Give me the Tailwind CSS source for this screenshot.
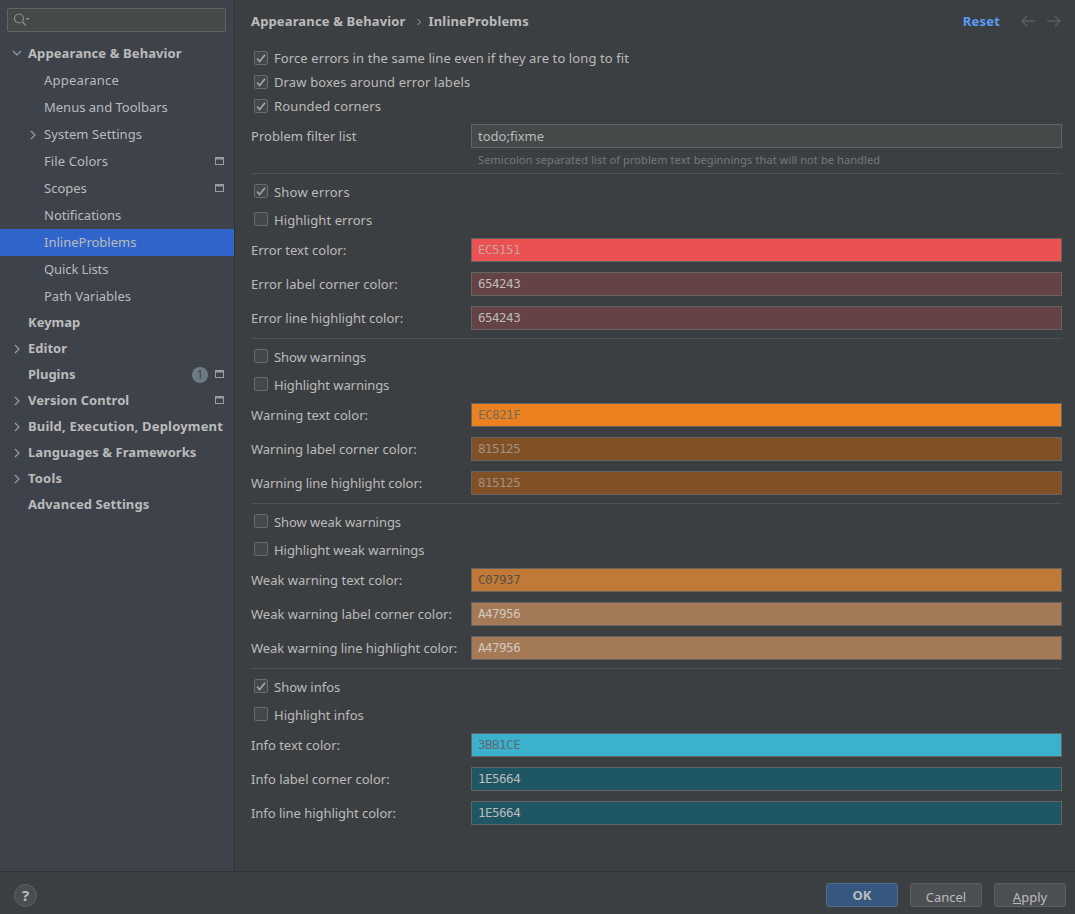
<!DOCTYPE html>
<html lang="en">
<head>
    <meta charset="UTF-8">
    <title>Settings - InlineProblems</title>
    <script src="https://cdn.jsdelivr.net/npm/@tailwindcss/browser@4"></script>
</head>
<body class="h-[914px] w-[1075px] overflow-hidden flex flex-col bg-[#3c3f41] text-[13px] text-[#bbbbbb] font-['Noto_Sans',sans-serif]">
    <div class="flex h-[871px]">
        <!-- Sidebar tree -->
        <aside class="w-[235px] shrink-0 bg-[#3e424b] border-r border-r-[#323232]">
            <div class="px-[7px] pt-[8px] pb-[8px]">
                <div class="h-[24px] w-[219px] flex items-center pl-[5px] gap-[1px] rounded-[2px] border border-[#646464] bg-[#45494a]">
                    <svg width="17" height="16" viewBox="0 0 17 16" fill="none" stroke="#8c8c8c" stroke-width="1.2"><circle cx="6" cy="6.5" r="4.5"/><path d="M9.5 10l3.5 3.5"/><path d="M12.5 6h4l-2 2.2z" fill="#8c8c8c" stroke="none"/></svg>
                </div>
            </div>
            <nav class="flex flex-col">
                <div class="h-[26px] flex items-center font-bold pl-[12px]">
                    <svg class="w-[10px] h-[10px] mr-[6px]" viewBox="0 0 10 10" fill="none" stroke="#a0a0a0" stroke-width="1.1"><path d="M1 3l4 4 4-4"/></svg>
                    <span class="pt-[2px] tracking-[0.1px]">Appearance &amp; Behavior</span>
                </div>
                <div class="mt-[1px] h-[27px] flex items-center pl-[44px] tracking-[0.2px]">Appearance</div>
                <div class="h-[27px] flex items-center pl-[44px]">Menus and Toolbars</div>
                <div class="h-[27px] flex items-center pl-[29px]">
                    <svg class="w-[8px] h-[10px] mr-[7px]" viewBox="0 0 8 10" fill="none" stroke="#a0a0a0" stroke-width="1.1"><path d="M2 1l4 4-4 4"/></svg>
                    <span class="tracking-[0.07px]">System Settings</span>
                </div>
                <div class="h-[27px] flex items-center justify-between pl-[44px] pr-[10px]">
                    <span class="tracking-[0.1px]">File Colors</span>
                    <svg class="mb-[2px]" width="9" height="8" viewBox="0 0 9 8"><path d="M0 0h9v8H0z" fill="#9a9da1"/><path d="M1 2.5h7V7H1z" fill="#3e424b"/></svg>
                </div>
                <div class="h-[27px] flex items-center justify-between pl-[44px] pr-[10px]">
                    Scopes
                    <svg class="mb-[2px]" width="9" height="8" viewBox="0 0 9 8"><path d="M0 0h9v8H0z" fill="#9a9da1"/><path d="M1 2.5h7V7H1z" fill="#3e424b"/></svg>
                </div>
                <div class="h-[27px] flex items-center pl-[44px]">Notifications</div>
                <div class="h-[27px] flex items-center pl-[44px] bg-[#2f65ca]">InlineProblems</div>
                <div class="h-[27px] flex items-center pl-[44px] tracking-[-0.1px]">Quick Lists</div>
                <div class="h-[27px] flex items-center pl-[44px]">Path Variables</div>
                <div class="h-[26px] flex items-center pl-[28px] font-bold">Keymap</div>
                <div class="h-[26px] flex items-center pl-[13px] font-bold">
                    <svg class="w-[8px] h-[10px] mr-[7px]" viewBox="0 0 8 10" fill="none" stroke="#a0a0a0" stroke-width="1.1"><path d="M2 1l4 4-4 4"/></svg>
                    Editor
                </div>
                <div class="h-[26px] flex items-center pl-[28px] pr-[10px] font-bold">
                    <span class="grow">Plugins</span>
                    <span class="w-[16px] h-[16px] rounded-full bg-[#6e7a85] text-[#3e424b] text-[12px] font-normal flex items-center justify-center mr-[7px]">1</span>
                    <svg class="mb-[2px]" width="9" height="8" viewBox="0 0 9 8"><path d="M0 0h9v8H0z" fill="#9a9da1"/><path d="M1 2.5h7V7H1z" fill="#3e424b"/></svg>
                </div>
                <div class="h-[26px] flex items-center pl-[13px] pr-[10px] font-bold">
                    <svg class="w-[8px] h-[10px] mr-[7px]" viewBox="0 0 8 10" fill="none" stroke="#a0a0a0" stroke-width="1.1"><path d="M2 1l4 4-4 4"/></svg>
                    <span class="grow tracking-[0.07px]">Version Control</span>
                    <svg class="mb-[2px]" width="9" height="8" viewBox="0 0 9 8"><path d="M0 0h9v8H0z" fill="#9a9da1"/><path d="M1 2.5h7V7H1z" fill="#3e424b"/></svg>
                </div>
                <div class="h-[26px] flex items-center pl-[13px] font-bold whitespace-nowrap">
                    <svg class="w-[8px] h-[10px] mr-[7px]" viewBox="0 0 8 10" fill="none" stroke="#a0a0a0" stroke-width="1.1"><path d="M2 1l4 4-4 4"/></svg>
                    <span class="tracking-[0.18px]">Build, Execution, Deployment</span>
                </div>
                <div class="h-[26px] flex items-center pl-[13px] font-bold">
                    <svg class="w-[8px] h-[10px] mr-[7px]" viewBox="0 0 8 10" fill="none" stroke="#a0a0a0" stroke-width="1.1"><path d="M2 1l4 4-4 4"/></svg>
                    <span class="tracking-[0.05px]">Languages &amp; Frameworks</span>
                </div>
                <div class="h-[26px] flex items-center pl-[13px] font-bold">
                    <svg class="w-[8px] h-[10px] mr-[7px]" viewBox="0 0 8 10" fill="none" stroke="#a0a0a0" stroke-width="1.1"><path d="M2 1l4 4-4 4"/></svg>
                    <span class="tracking-[0.2px]">Tools</span>
                </div>
                <div class="h-[26px] flex items-center pl-[28px] font-bold tracking-[0.06px]">Advanced Settings</div>
            </nav>
        </aside>

        <!-- Settings content -->
        <main class="grow pl-[16px] pr-[13px]">
            <header class="h-[42px] flex items-center font-bold">
                <span class="pt-[2px] tracking-[0.14px]">Appearance &amp; Behavior</span>
                <svg class="ml-[10px] mr-[7px] mt-[1px]" width="6" height="8" viewBox="0 0 6 8" fill="none" stroke="#a0a0a0"><path d="M1.5 1l3 3-3 3"/></svg>
                <span class="pt-[2px] tracking-[0.14px]">InlineProblems</span>
                <span class="pt-[2px] ml-auto text-[#589df6] tracking-[0.2px]">Reset</span>
                <svg class="ml-[21px]" width="14" height="12" viewBox="0 0 14 12" fill="none" stroke="#5a5d5f" stroke-width="1.5"><path d="M14 6H1M6 1L1 6l5 5"/></svg>
                <svg class="ml-[12px] mr-[1px]" width="14" height="12" viewBox="0 0 14 12" fill="none" stroke="#5a5d5f" stroke-width="1.5"><path d="M0 6h13M8 1l5 5-5 5"/></svg>
            </header>

            <div class="pt-[4px] w-[811px]">
                <label class="h-[24px] flex items-center gap-[6px]">
                    <span class="ml-[3px] w-[14px] h-[14px] rounded-[2px] border border-[#6b6b6b] bg-[#43494a] flex items-center justify-center"><svg width="10" height="9" viewBox="0 0 10 9" fill="none" stroke="#a7a7a7" stroke-width="1.6"><path d="M1 4.5l2.6 3L9 .8"/></svg></span>
                    <span class="pt-[2px] tracking-[0.1px]">Force errors in the same line even if they are to long to fit</span>
                </label>
                <label class="h-[24px] flex items-center gap-[6px]">
                    <span class="ml-[3px] w-[14px] h-[14px] rounded-[2px] border border-[#6b6b6b] bg-[#43494a] flex items-center justify-center"><svg width="10" height="9" viewBox="0 0 10 9" fill="none" stroke="#a7a7a7" stroke-width="1.6"><path d="M1 4.5l2.6 3L9 .8"/></svg></span>
                    <span class="pt-[2px] tracking-[0.13px]">Draw boxes around error labels</span>
                </label>
                <label class="h-[24px] flex items-center gap-[6px]">
                    <span class="ml-[3px] w-[14px] h-[14px] rounded-[2px] border border-[#6b6b6b] bg-[#43494a] flex items-center justify-center"><svg width="10" height="9" viewBox="0 0 10 9" fill="none" stroke="#a7a7a7" stroke-width="1.6"><path d="M1 4.5l2.6 3L9 .8"/></svg></span>
                    <span class="pt-[2px] tracking-[0.13px]">Rounded corners</span>
                </label>
                <div class="mt-[6px] h-[24px] flex items-center">
                    <span class="w-[220px] pt-[2px] tracking-[0.05px]">Problem filter list</span>
                    <div class="w-[591px] h-[24px] border border-[#646464] bg-[#45494a] pl-[6px] pt-[2px] flex items-center">todo;fixme</div>
                </div>
                <p class="pl-[227px] h-[25px] pt-[3px] text-[11px] leading-[18px] text-[#787878] tracking-[0.1px]">Semicolon separated list of problem text beginnings that will not be handled</p>

                <!-- Errors -->
                <section class="border-t border-[#515151] h-[165px]">
                    <label class="mt-[6px] h-[22px] flex items-center gap-[6px]">
                        <span class="ml-[3px] w-[14px] h-[14px] rounded-[2px] border border-[#6b6b6b] bg-[#43494a] flex items-center justify-center"><svg width="10" height="9" viewBox="0 0 10 9" fill="none" stroke="#a7a7a7" stroke-width="1.6"><path d="M1 4.5l2.6 3L9 .8"/></svg></span>
                        <span class="pt-[4px] tracking-[0.2px]">Show errors</span>
                    </label>
                    <label class="mt-[6px] h-[22px] flex items-center gap-[6px]">
                        <span class="ml-[3px] w-[14px] h-[14px] rounded-[2px] border border-[#6b6b6b] bg-[#43494a]"></span>
                        <span class="pt-[4px] tracking-[0.08px]">Highlight errors</span>
                    </label>
                    <div class="mt-[8px] h-[24px] flex items-center">
                        <span class="w-[220px] pt-[2px]">Error text color:</span>
                        <div class="w-[591px] h-[24px] border border-[#646464] bg-[#ec5151] text-[#c4a3a3] pl-[6px] flex items-center font-['DejaVu_Sans_Mono',monospace] text-[12.5px] tracking-[-0.5px]">EC5151</div>
                    </div>
                    <div class="mt-[10px] h-[24px] flex items-center">
                        <span class="w-[220px] pt-[2px] tracking-[0.08px]">Error label corner color:</span>
                        <div class="w-[591px] h-[24px] border border-[#646464] bg-[#654243] pl-[6px] flex items-center font-['DejaVu_Sans_Mono',monospace] text-[12.5px] tracking-[-0.5px]">654243</div>
                    </div>
                    <div class="mt-[10px] h-[24px] flex items-center">
                        <span class="w-[220px] pt-[2px]">Error line highlight color:</span>
                        <div class="w-[591px] h-[24px] border border-[#646464] bg-[#654243] pl-[6px] flex items-center font-['DejaVu_Sans_Mono',monospace] text-[12.5px] tracking-[-0.5px]">654243</div>
                    </div>
                </section>

                <!-- Warnings -->
                <section class="border-t border-[#515151] h-[165px]">
                    <label class="mt-[6px] h-[22px] flex items-center gap-[6px]">
                        <span class="ml-[3px] w-[14px] h-[14px] rounded-[2px] border border-[#6b6b6b] bg-[#43494a]"></span>
                        <span class="pt-[4px] tracking-[-0.07px]">Show warnings</span>
                    </label>
                    <label class="mt-[6px] h-[22px] flex items-center gap-[6px]">
                        <span class="ml-[3px] w-[14px] h-[14px] rounded-[2px] border border-[#6b6b6b] bg-[#43494a]"></span>
                        <span class="pt-[4px] tracking-[-0.06px]">Highlight warnings</span>
                    </label>
                    <div class="mt-[8px] h-[24px] flex items-center">
                        <span class="w-[220px] pt-[2px] tracking-[0.05px]">Warning text color:</span>
                        <div class="w-[591px] h-[24px] border border-[#646464] bg-[#ec821f] text-[#6f6a62] pl-[6px] flex items-center font-['DejaVu_Sans_Mono',monospace] text-[12.5px] tracking-[-0.5px]">EC821F</div>
                    </div>
                    <div class="mt-[10px] h-[24px] flex items-center">
                        <span class="w-[220px] pt-[2px]">Warning label corner color:</span>
                        <div class="w-[591px] h-[24px] border border-[#646464] bg-[#815125] text-[#a09080] pl-[6px] flex items-center font-['DejaVu_Sans_Mono',monospace] text-[12.5px] tracking-[-0.5px]">815125</div>
                    </div>
                    <div class="mt-[10px] h-[24px] flex items-center">
                        <span class="w-[220px] pt-[2px] tracking-[-0.07px]">Warning line highlight color:</span>
                        <div class="w-[591px] h-[24px] border border-[#646464] bg-[#815125] text-[#a09080] pl-[6px] flex items-center font-['DejaVu_Sans_Mono',monospace] text-[12.5px] tracking-[-0.5px]">815125</div>
                    </div>
                </section>

                <!-- Weak warnings -->
                <section class="border-t border-[#515151] h-[165px]">
                    <label class="mt-[6px] h-[22px] flex items-center gap-[6px]">
                        <span class="ml-[3px] w-[14px] h-[14px] rounded-[2px] border border-[#6b6b6b] bg-[#43494a]"></span>
                        <span class="pt-[4px] tracking-[-0.06px]">Show weak warnings</span>
                    </label>
                    <label class="mt-[6px] h-[22px] flex items-center gap-[6px]">
                        <span class="ml-[3px] w-[14px] h-[14px] rounded-[2px] border border-[#6b6b6b] bg-[#43494a]"></span>
                        <span class="pt-[4px] tracking-[-0.05px]">Highlight weak warnings</span>
                    </label>
                    <div class="mt-[8px] h-[24px] flex items-center">
                        <span class="w-[220px] pt-[2px]">Weak warning text color:</span>
                        <div class="w-[591px] h-[24px] border border-[#646464] bg-[#c07937] text-[#5a4f45] pl-[6px] flex items-center font-['DejaVu_Sans_Mono',monospace] text-[12.5px] tracking-[-0.5px]">C07937</div>
                    </div>
                    <div class="mt-[10px] h-[24px] flex items-center">
                        <span class="w-[220px] pt-[2px]">Weak warning label corner color:</span>
                        <div class="w-[591px] h-[24px] border border-[#646464] bg-[#a47956] text-[#d0c8c0] pl-[6px] flex items-center font-['DejaVu_Sans_Mono',monospace] text-[12.5px] tracking-[-0.5px]">A47956</div>
                    </div>
                    <div class="mt-[10px] h-[24px] flex items-center">
                        <span class="w-[220px] pt-[2px] whitespace-nowrap tracking-[-0.06px]">Weak warning line highlight color:</span>
                        <div class="w-[591px] h-[24px] border border-[#646464] bg-[#a47956] text-[#d0c8c0] pl-[6px] flex items-center font-['DejaVu_Sans_Mono',monospace] text-[12.5px] tracking-[-0.5px]">A47956</div>
                    </div>
                </section>

                <!-- Infos -->
                <section class="border-t border-[#515151]">
                    <label class="mt-[6px] h-[22px] flex items-center gap-[6px]">
                        <span class="ml-[3px] w-[14px] h-[14px] rounded-[2px] border border-[#6b6b6b] bg-[#43494a] flex items-center justify-center"><svg width="10" height="9" viewBox="0 0 10 9" fill="none" stroke="#a7a7a7" stroke-width="1.6"><path d="M1 4.5l2.6 3L9 .8"/></svg></span>
                        <span class="pt-[4px]">Show infos</span>
                    </label>
                    <label class="mt-[6px] h-[22px] flex items-center gap-[6px]">
                        <span class="ml-[3px] w-[14px] h-[14px] rounded-[2px] border border-[#6b6b6b] bg-[#43494a]"></span>
                        <span class="pt-[4px]">Highlight infos</span>
                    </label>
                    <div class="mt-[8px] h-[24px] flex items-center">
                        <span class="w-[220px] pt-[2px]">Info text color:</span>
                        <div class="w-[591px] h-[24px] border border-[#646464] bg-[#3bb1ce] text-[#5e6b73] pl-[6px] flex items-center font-['DejaVu_Sans_Mono',monospace] text-[12.5px] tracking-[-0.5px]">3BB1CE</div>
                    </div>
                    <div class="mt-[10px] h-[24px] flex items-center">
                        <span class="w-[220px] pt-[2px]">Info label corner color:</span>
                        <div class="w-[591px] h-[24px] border border-[#646464] bg-[#1e5664] pl-[6px] flex items-center font-['DejaVu_Sans_Mono',monospace] text-[12.5px] tracking-[-0.5px]">1E5664</div>
                    </div>
                    <div class="mt-[10px] h-[24px] flex items-center">
                        <span class="w-[220px] pt-[2px] tracking-[-0.04px]">Info line highlight color:</span>
                        <div class="w-[591px] h-[24px] border border-[#646464] bg-[#1e5664] pl-[6px] flex items-center font-['DejaVu_Sans_Mono',monospace] text-[12.5px] tracking-[-0.5px]">1E5664</div>
                    </div>
                </section>
            </div>
        </main>
    </div>

    <footer class="h-[43px] border-t border-[#323232] flex items-center pl-[14px] pr-[9px] pt-[4px]">
        <div class="w-[23px] h-[23px] rounded-full border border-[#5e6060] bg-[#4b4e50] flex items-center justify-center font-bold text-[15px]">?</div>
        <button class="ml-auto w-[72px] h-[24px] rounded-[3px] border border-[#4c708c] bg-[#365880] font-bold pt-[1px]">OK</button>
        <button class="ml-[12px] w-[72px] h-[24px] rounded-[3px] border border-[#5e6060] bg-[#4c5052] pt-[4px]">Cancel</button>
        <button class="ml-[12px] w-[72px] h-[24px] rounded-[3px] border border-[#5e6060] bg-[#4c5052] pt-[4px]"><span class="underline">A</span>pply</button>
    </footer>
</body>
</html>
